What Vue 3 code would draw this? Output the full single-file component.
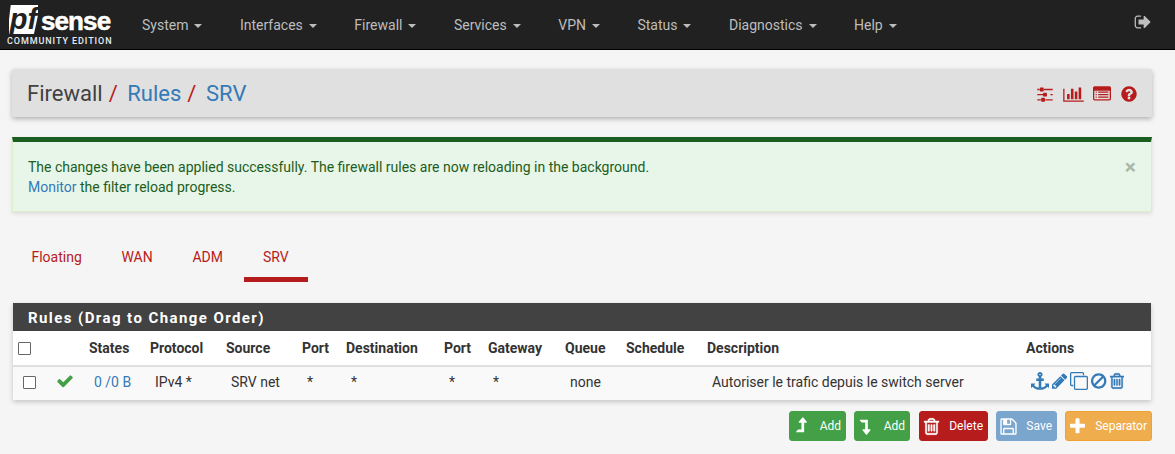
<script setup>
const navItems = ['System', 'Interfaces', 'Firewall', 'Services', 'VPN', 'Status', 'Diagnostics', 'Help']
const tabs = ['Floating', 'WAN', 'ADM', 'SRV']
const headers = ['', '', 'States', 'Protocol', 'Source', 'Port', 'Destination', 'Port', 'Gateway', 'Queue', 'Schedule', 'Description', 'Actions']
const cols = ['c1', 'c2', 'c3', 'c4', 'c5', 'c6', 'c7', 'c8', 'c9', 'c10', 'c11', 'c12', 'c13']
const P = {
  signout: 'M704 1440q0 4 1 20t.5 26.500-3 23.500-10 19.500-20.500 6.500h-320q-119 0-203.500-84.500t-84.500-203.500v-704q0-119 84.500-203.500t203.500-84.500h320q13 0 22.500 9.500t9.500 22.500q0 4 1 20t.5 26.500-3 23.500-10 19.500-20.500 6.500h-320q-66 0-113 47t-47 113v704q0 66 47 113t113 47h312l11.500 1 11.500 3 8 5.500 7 9 2 13.500zm928-544q0 26-19 45l-544 544q-19 19-45 19t-45-19-19-45v-288h-448q-26 0-45-19t-19-45v-384q0-26 19-45t45-19h448v-288q0-26 19-45t45-19 45 19l544 544q19 19 19 45z',
  sliders: 'M480 1408v128h-352v-128h352zm352-128q26 0 45 19t19 45v256q0 26-19 45t-45 19h-256q-26 0-45-19t-19-45v-256q0-26 19-45t45-19h256zm160-384v128h-864v-128h864zm-640-512v128h-224v-128h224zm1312 1024v128h-736v-128h736zm-960-1152q26 0 45 19t19 45v256q0 26-19 45t-45 19h-256q-26 0-45-19t-19-45v-256q0-26 19-45t45-19h256zm320 512q26 0 45 19t19 45v256q0 26-19 45t-45 19h-256q-26 0-45-19t-19-45v-256q0-26 19-45t45-19h256zm640 128v128h-224v-128h224zm0-512v128h-864v-128h864z',
  chart: 'M640 896v512h-256v-512h256zm384-512v1024h-256v-1024h256zm1024 1152v128h-2048v-1280h128v1152h1920zm-640-896v768h-256v-768h256zm384-384v1152h-256v-1152h256z',
  list: 'M384 1184v64q0 13-9.500 22.500t-22.500 9.500h-64q-13 0-22.500-9.500t-9.500-22.500v-64q0-13 9.500-22.500t22.500-9.500h64q13 0 22.500 9.500t9.500 22.500zm0-256v64q0 13-9.500 22.500t-22.500 9.500h-64q-13 0-22.500-9.500t-9.500-22.500v-64q0-13 9.500-22.500t22.500-9.500h64q13 0 22.500 9.500t9.500 22.500zm0-256v64q0 13-9.500 22.500t-22.500 9.500h-64q-13 0-22.500-9.500t-9.500-22.500v-64q0-13 9.500-22.500t22.500-9.500h64q13 0 22.500 9.500t9.500 22.500zm1152 512v64q0 13-9.500 22.500t-22.500 9.500h-960q-13 0-22.500-9.500t-9.500-22.500v-64q0-13 9.500-22.500t22.500-9.500h960q13 0 22.500 9.500t9.500 22.500zm0-256v64q0 13-9.500 22.500t-22.500 9.500h-960q-13 0-22.500-9.500t-9.500-22.500v-64q0-13 9.500-22.500t22.500-9.500h960q13 0 22.500 9.500t9.500 22.500zm0-256v64q0 13-9.500 22.500t-22.500 9.500h-960q-13 0-22.500-9.500t-9.500-22.500v-64q0-13 9.500-22.500t22.500-9.500h960q13 0 22.500 9.500t9.500 22.500zm128 704v-832q0-13-9.500-22.500t-22.500-9.500h-1472q-13 0-22.500 9.500t-9.500 22.500v832q0 13 9.500 22.500t22.500 9.500h1472q13 0 22.500-9.500t9.500-22.500zm128-1088v1088q0 66-47 113t-113 47h-1472q-66 0-113-47t-47-113v-1088q0-66 47-113t113-47h1472q66 0 113 47t47 113z',
  question: 'M1024 1376v-192q0-14-9-23t-23-9h-192q-14 0-23 9t-9 23v192q0 14 9 23t23 9h192q14 0 23-9t9-23zm256-672q0-88-55.500-163t-138.500-116-170-41q-243 0-371 213-15 24 8 42l132 100q7 6 19 6 16 0 25-12 53-68 86-92 34-24 86-24 48 0 85.500 26t37.500 59q0 38-20 61t-68 45q-63 28-115.500 86.500t-52.500 125.500v36q0 14 9 23t23 9h192q14 0 23-9t9-23q0-19 21.500-49.500t54.500-49.500q32-18 49-28.500t46-35 44.500-48 28-60.500 12.500-81zm384 192q0 209-103 385.500t-279.500 279.500-385.500 103-385.500-103-279.500-279.500-103-385.500 103-385.500 279.500-279.500 385.500-103 385.500 103 279.500 279.500 103 385.500z',
  check: 'M1671 566q0 40-28 68l-724 724-136 136q-28 28-68 28t-68-28l-136-136-362-362q-28-28-28-68t28-68l136-136q28-28 68-28t68 28l294 295 656-657q28-28 68-28t68 28l136 136q28 28 28 68z',
  anchor: 'M960 256q0-26-19-45t-45-19-45 19-19 45 19 45 45 19 45-19 19-45zm832 928v352q0 22-20 30-8 2-12 2-12 0-23-9l-93-93q-119 143-318.500 226.500t-429.500 83.500-429.500-83.500-318.500-226.500l-93 93q-9 9-23 9-4 0-12-2-20-8-20-30v-352q0-14 9-23t23-9h352q22 0 30 20 8 19-7 35l-100 100q67 91 189.500 153.500t271.500 82.500v-647h-192q-26 0-45-19t-19-45v-128q0-26 19-45t45-19h192v-163q-58-34-93-92.500t-35-128.500q0-106 75-181t181-75 181 75 75 181q0 70-35 128.500t-93 92.500v163h192q26 0 45 19t19 45v128q0 26-19 45t-45 19h-192v647q149-20 271.500-82.500t189.500-153.500l-100-100q-15-16-7-35 8-20 30-20h352q14 0 23 9t9 23z',
  pencil: 'M491 1536l91-91-235-235-91 91v107h128v128h107zm523-928q0-22-22-22-10 0-17 7l-542 542q-7 7-7 17 0 22 22 22 10 0 17-7l542-542q7-7 7-17zm-54-192l416 416-832 832h-416v-416zm683 96q0 53-37 90l-166 166-416-416 166-165q36-38 90-38 53 0 91 38l235 234q37 39 37 91z',
  clone: 'M1664 1632v-1088q0-13-9.500-22.500t-22.500-9.500h-1088q-13 0-22.500 9.500t-9.500 22.500v1088q0 13 9.500 22.500t22.500 9.500h1088q13 0 22.500-9.500t9.500-22.500zm128-1088v1088q0 66-47 113t-113 47h-1088q-66 0-113-47t-47-113v-1088q0-66 47-113t113-47h1088q66 0 113 47t47 113zm-384-384v160h-128v-160q0-13-9.500-22.500t-22.500-9.500h-1088q-13 0-22.500 9.500t-9.500 22.500v1088q0 13 9.500 22.500t22.500 9.500h160v128h-160q-66 0-113-47t-47-113v-1088q0-66 47-113t113-47h1088q66 0 113 47t47 113z',
  ban: 'M1440 893q0-161-87-295l-754 753q137 89 297 89 111 0 211.500-43.500t173.500-116.500 116-174.500 43-212.500zm-999 299l755-754q-135-91-300-91-148 0-273 73t-198 199-73 274q0 162 89 299zm1223-299q0 157-61 300t-163.500 246-245 164-298.500 61-298.500-61-245-164-163.500-246-61-300 61-299.500 163.500-245.500 245-164 298.500-61 298.500 61 245 164 163.500 245.500 61 299.500z',
  trash: 'M704 736v576q0 14-9 23t-23 9h-64q-14 0-23-9t-9-23v-576q0-14 9-23t23-9h64q14 0 23 9t9 23zm256 0v576q0 14-9 23t-23 9h-64q-14 0-23-9t-9-23v-576q0-14 9-23t23-9h64q14 0 23 9t9 23zm256 0v576q0 14-9 23t-23 9h-64q-14 0-23-9t-9-23v-576q0-14 9-23t23-9h64q14 0 23 9t9 23zm128 724v-948h-896v948q0 22 7 40.500t14.500 27 10.500 8.500h832q3 0 10.500-8.500t14.500-27 7-40.500zm-672-1076h448l-48-117q-7-9-17-11h-317q-10 2-17 11zm928 32v64q0 14-9 23t-23 9h-96v948q0 83-47 143.500t-113 60.500h-832q-66 0-113-58.500t-47-141.500v-952h-96q-14 0-23-9t-9-23v-64q0-14 9-23t23-9h309l70-167q15-37 54-63t79-26h320q40 0 79 26t54 63l70 167h309q14 0 23 9t9 23z',
  save: 'M512 1536h768v-384h-768v384zm896 0h128v-896q0-14-10-38.500t-20-34.500l-281-281q-10-10-34-20t-39-10v416q0 40-28 68t-68 28h-576q-40 0-68-28t-28-68v-416h-128v1280h128v-416q0-40 28-68t68-28h832q40 0 68 28t28 68v416zm-384-928v-320q0-13-9.500-22.500t-22.500-9.500h-192q-13 0-22.500 9.500t-9.500 22.500v320q0 13 9.500 22.500t22.500 9.500h192q13 0 22.500-9.500t9.500-22.500zm640 32v928q0 40-28 68t-68 28h-1344q-40 0-68-28t-28-68v-1344q0-40 28-68t68-28h928q40 0 88 20t76 48l280 280q28 28 48 76t20 88z',
  plus: 'M1600 736v192q0 40-28 68t-68 28h-416v416q0 40-28 68t-68 28h-192q-40 0-68-28t-28-68v-416h-416q-40 0-68-28t-28-68v-192q0-40 28-68t68-28h416v-416q0-40 28-68t68-28h192q40 0 68 28t28 68v416h416q40 0 68 28t28 68z',
  up: 'M1395 508q-18 36-58 36h-192v864q0 14-9 23t-23 9h-704q-21 0-29-18-8-20 4-35l160-192q9-11 25-11h320v-640h-192q-40 0-58-37-17-37 9-68l320-384q18-22 49-22t49 22l320 384q27 32 9 69z',
  down: 'M288 256h704q13 0 22.500 9.500t9.500 23.500v863h192q40 0 58 37t-9 69l-320 384q-18 22-49 22t-49-22l-320-384q-26-31-9-69 18-37 58-37h192v-640h-320q-14 0-25-11l-160-192q-13-14-4-34 9-19 29-19z'
}
const buttons = [
  { label: 'Add', icon: P.up, cls: 'green b-add1' },
  { label: 'Add', icon: P.down, cls: 'green b-add2' },
  { label: 'Delete', icon: P.trash, cls: 'red b-del', bold: true },
  { label: 'Save', icon: P.save, cls: 'blue b-save' },
  { label: 'Separator', icon: P.plus, cls: 'orange b-sep' }
]
const row = [
  { t: '0 /0 B', c: 'link' }, { t: 'IPv4 *' }, { t: 'SRV net' }, { t: '*' }, { t: '*' }, { t: '*' }, { t: '*' },
  { t: 'none' }, { t: '' }, { t: 'Autoriser le trafic depuis le switch server' }
]
const actions = [
  { d: P.anchor, vb: '0 0 1792 1792', c: 'a-anchor' },
  { d: P.pencil, vb: '128 0 1536 1792', c: 'a-pencil' },
  { d: P.clone, vb: '0 0 1792 1792', c: 'a-clone' },
  { d: P.ban, vb: '128 0 1536 1792', c: 'a-ban' },
  { d: P.trash, vb: '192 0 1408 1792', c: 'a-trash heavy' }
]
</script>

<template>
  <div class="page">
    <header class="nav">
      <div class="logo">
        <div class="logo-top">
          <span class="pf"><span class="pf-t">pf</span></span>
          <span class="sense">sense</span>
        </div>
        <div class="edition">COMMUNITY EDITION</div>
      </div>
      <nav class="menu">
        <span v-for="n in navItems" :key="n" class="menu-item">{{ n }}<i class="caret"></i></span>
      </nav>
      <svg class="signout" viewBox="0 0 1792 1792"><path :d="P.signout" /></svg>
    </header>

    <main class="content">
      <section class="crumb">
        <h1 class="crumb-title">
          <span>Firewall</span><em>/</em><a>Rules</a><em>/</em><a>SRV</a>
        </h1>
        <div class="crumb-icons">
          <svg class="ci" viewBox="0 0 1792 1792"><path :d="P.sliders" /></svg>
          <svg class="ci chart" viewBox="0 0 2048 1792"><path :d="P.chart" /></svg>
          <svg class="ci list" viewBox="0 0 1792 1792"><path :d="P.list" /><rect x="80" y="220" width="1632" height="340" /></svg>
          <svg class="ci" viewBox="0 0 1792 1792"><path :d="P.question" /></svg>
        </div>
      </section>

      <section class="alert">
        <div class="alert-text">
          The changes have been applied successfully. The firewall rules are now reloading in the background.<br />
          <a>Monitor</a> the filter reload progress.
        </div>
        <span class="close">×</span>
      </section>

      <ul class="tabs">
        <li v-for="t in tabs" :key="t" :class="['tab', { active: t === 'SRV' }]">{{ t }}</li>
      </ul>

      <section class="panel">
        <h2 class="panel-head">Rules (Drag to Change Order)</h2>
        <table class="rules">
          <colgroup>
            <col v-for="c in cols" :key="c" :class="c" />
          </colgroup>
          <thead>
            <tr>
              <th v-for="(h, i) in headers" :key="i">
                <span v-if="i === 0" class="cb head-cb"></span>
                <template v-else>{{ h }}</template>
              </th>
            </tr>
          </thead>
          <tbody>
            <tr>
              <td><span class="cb row-cb"></span></td>
              <td><svg class="check" viewBox="0 0 1792 1792"><path :d="P.check" /></svg></td>
              <td v-for="(c, i) in row" :key="i" :class="c.c">{{ c.t }}</td>
              <td class="actions">
                <div class="act-row">
                  <svg v-for="a in actions" :key="a.c" :class="['act', a.c]" :viewBox="a.vb"><path :d="a.d" /></svg>
                </div>
              </td>
            </tr>
          </tbody>
        </table>
      </section>

      <div class="buttons">
        <button v-for="(b, i) in buttons" :key="i" :class="['btn', b.cls]" type="button">
          <svg :class="['btn-ic', { heavy: b.bold }]" viewBox="0 0 1792 1792"><path :d="b.icon" /></svg>
          <span>{{ b.label }}</span>
        </button>
      </div>
    </main>
  </div>
</template>

<style>
html, body { margin: 0; background: #f5f5f5; overflow: hidden; }
</style>

<style scoped>
.page { width: 1175px; height: 454px; overflow: hidden; font-family: Roboto, "Liberation Sans", sans-serif; font-size: 14px; color: #212121; background: #f5f5f5; }

.nav { height: 49px; background: #212121; border-bottom: 1px solid #000; display: flex; align-items: flex-start; }
.logo { width: 142px; flex: none; padding: 5px 0 0 7px; box-sizing: border-box; }
.logo-top { display: flex; align-items: flex-start; height: 29px; padding-left: 2px; }
.pf { width: 29px; height: 29px; background: #fff; clip-path: polygon(6% 0, 100% 0, 100% 35%, 86% 100%, 0 100%, 0 50%); display: block; flex: none; }
.pf-t { color: #212121; font: italic 700 29px/29px "Liberation Sans", sans-serif; display: block; text-align: center; }
.sense { color: #fff; font: 700 26px/24px "Liberation Sans", sans-serif; letter-spacing: -.9px; -webkit-text-stroke: .5px #fff; margin-left: 3px; margin-top: 4px; }
.edition { color: #e4edf5; font: 500 9px/11px Roboto, sans-serif; letter-spacing: .92px; margin-top: 1.5px; white-space: nowrap; }
.menu { display: flex; gap: 37.5px; height: 49px; align-items: center; flex: 1; color: #bdbdbd; }
.menu-item { white-space: nowrap; }
.caret { display: inline-block; width: 0; height: 0; margin-left: 6px; vertical-align: middle; border-top: 4px solid; border-left: 4px solid transparent; border-right: 4px solid transparent; }
.signout { width: 18px; height: 18px; fill: #bdbdbd; margin: 13px 23px 0 0; flex: none; }

.content { padding: 19px 23px 0 12px; }

.crumb { height: 48px; box-sizing: border-box; padding: 2px 14px 0 15px; background: #e0e0e0; border-radius: 2px; box-shadow: 0 2px 5px rgba(0,0,0,.28); display: flex; align-items: center; justify-content: space-between; }
.crumb-title { margin: 0; font-size: 22px; font-weight: 400; line-height: 26px; color: #424242; white-space: nowrap; }
.crumb-title em { font-style: normal; color: #b71c1c; margin: 0 9.6px 0 6px; }
.crumb-title a { color: #337ab7; }
.crumb-icons { display: flex; align-items: center; gap: 9px; }
.ci { width: 18px; height: 18px; fill: #b71c1c; display: block; }
.ci.chart { width: 21px; }

.alert { margin-top: 20px; height: 75px; box-sizing: border-box; background: #e8f5e9; border: 1px solid #dcedc8; border-top: 5px solid #1b5e20; box-shadow: 0 2px 4px rgba(0,0,0,.1); padding: 15px 15px 0; display: flex; justify-content: space-between; color: #1b5e20; line-height: 20px; }
.alert a { color: #337ab7; }
.close { color: #a9b8aa; font-size: 21px; font-weight: 700; line-height: 20px; }

.tabs { list-style: none; display: flex; margin: 25px 0 0 -.4px; padding: 0; height: 45px; }
.tab { padding: 0 19.85px; color: #b71c1c; line-height: 40px; box-sizing: border-box; height: 45px; border-bottom: 5px solid transparent; }
.tab.active { border-bottom-color: #b71c1c; padding: 0 19.2px; margin-left: 1px; }

.panel { margin: 21px 0 0 1px; width: 1138px; background: #fff; box-shadow: 0 2px 5px rgba(0,0,0,.2); }
.panel-head { margin: 0; height: 28px; background: #424242; color: #fff; font-size: 15px; font-weight: 700; line-height: 30px; letter-spacing: 1.42px; padding-left: 15px; white-space: nowrap; }

.rules { width: 1138px; table-layout: fixed; border-collapse: collapse; font-size: 14px; }
.c1 { width: 39px; } .c2 { width: 32px; } .c3 { width: 61px; } .c4 { width: 76px; } .c5 { width: 76px; }
.c6 { width: 44px; } .c7 { width: 98px; } .c8 { width: 44px; } .c9 { width: 77px; } .c10 { width: 61px; }
.c11 { width: 81px; } .c12 { width: 319px; } .c13 { width: 130px; }
.rules th { height: 35px; padding: 0 5px; box-sizing: border-box; text-align: left; font-weight: 700; color: #333; border-bottom: 2px solid #e0e0e0; white-space: nowrap; }
.rules td { height: 34px; padding: 0 10px 4px; box-sizing: border-box; background: #f9f9f9; color: #333; white-space: nowrap; }
.rules td.link { color: #337ab7; }
.cb { display: block; width: 11px; height: 11px; background: #fff; border: 1px solid #666; border-radius: 1px; }
.row-cb { margin-top: 2px; }
.check { width: 18px; height: 18px; fill: #43a047; display: block; margin: -1px 0 0 -6px; }
.rules td.actions { padding: 0 0 6px 10px; }
.act-row { display: flex; align-items: center; gap: 3px; }
.act { height: 18px; fill: #337ab7; flex: none; display: block; }
.a-anchor, .a-clone { width: 18px; }
.a-pencil, .a-ban { width: 15.4px; }
.a-trash { width: 14px; margin-left: .6px; }
.heavy { stroke: currentColor; stroke-width: 45; }
.a-trash.heavy { color: #337ab7; }

.buttons { display: flex; justify-content: flex-end; gap: 8px; margin-top: 11px; }
.btn { height: 30px; border: 1px solid; border-radius: 3px; color: #fff; font: 400 12px Roboto, sans-serif; display: flex; align-items: center; justify-content: space-between; padding: 0 4px 0 2px; box-sizing: border-box; cursor: pointer; }
.btn-ic { width: 19px; height: 19px; fill: #fff; flex: none; }
.green { background: #43a047; border-color: #43a047; }
.red { background: #b71c1c; border-color: #b71c1c; }
.blue { background: #7aa5cd; border-color: #7aa5cd; }
.orange { background: #f0ad4e; border-color: #eea236; }
.b-add1 { width: 57px; } .b-add2 { width: 56px; margin-right: 1px; } .b-del { width: 69px; } .b-save { width: 61px; } .b-sep { width: 87px; }
</style>
